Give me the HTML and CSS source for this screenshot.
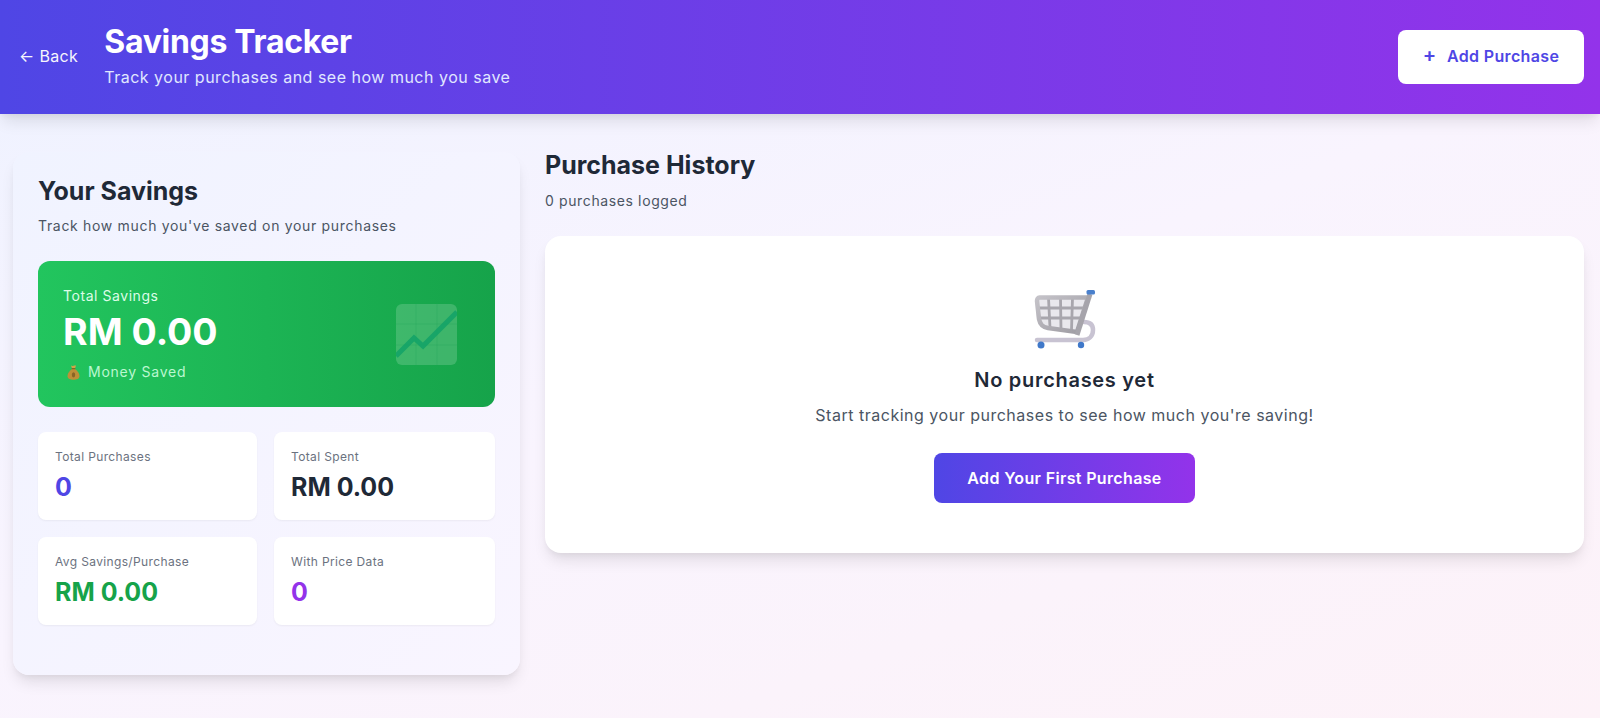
FILE: index.html
```html
<!DOCTYPE html>
<html lang="en">
<head>
    <meta charset="UTF-8">
    <meta name="viewport" content="width=device-width, initial-scale=1.0">
    <title>Savings Tracker</title>
    <link rel="stylesheet" href="styles.css">
</head>
<body>

    <!-- Header -->
    <header class="header">
        <div class="header-left">
            <a class="back-link" href="#">← Back</a>
            <div class="header-text">
                <h1>Savings Tracker</h1>
                <p>Track your purchases and see how much you save</p>
            </div>
        </div>
        <button class="add-btn"><span class="plus">+</span> Add Purchase</button>
    </header>

    <main class="layout">

        <!-- Savings Panel -->
        <section class="panel">
            <h2>Your Savings</h2>
            <p class="panel-sub">Track how much you've saved on your purchases</p>

            <div class="total-card">
                <div>
                    <div class="total-label">Total Savings</div>
                    <div class="total-value">RM 0.00</div>
                    <div class="total-note">
                        <svg class="bag" viewBox="0 0 13 15">
                            <path d="M4 0.500c1 .6 1.500 .6 2.500 .2 1-.4 1.500-.2 2.500-.2L8 3.500H5z" fill="#d0a548"/>
                            <path d="M5 4h3c2.500 1.800 4.500 4.500 4.500 7 0 3-2.800 3.700-6 3.700s-6-.7-6-3.700c0-2.500 2-5.200 4.500-7z" fill="#bd8f38"/>
                            <rect x="4.700" y="3.200" width="3.600" height="1" fill="#7c5a22"/>
                            <ellipse cx="6.500" cy="9.800" rx="1.700" ry="2.600" fill="#8a6526"/>
                        </svg>
                        Money Saved
                    </div>
                </div>
                <svg class="chart" viewBox="0 0 61 61">
                    <rect class="chart-bg" width="61" height="61" rx="6"/>
                    <path class="chart-grid" d="M20 0v61M41 0v61M0 20h61M0 41h61"/>
                    <path class="chart-line" d="M0 52l18-18 9 8 34-34"/>
                </svg>
            </div>

            <div class="stats">
                <div class="stat">
                    <div class="stat-label">Total Purchases</div>
                    <div class="stat-value indigo">0</div>
                </div>
                <div class="stat">
                    <div class="stat-label">Total Spent</div>
                    <div class="stat-value">RM 0.00</div>
                </div>
                <div class="stat">
                    <div class="stat-label">Avg Savings/Purchase</div>
                    <div class="stat-value green">RM 0.00</div>
                </div>
                <div class="stat">
                    <div class="stat-label">With Price Data</div>
                    <div class="stat-value purple">0</div>
                </div>
            </div>
        </section>

        <!-- Purchase History -->
        <section class="history">
            <h2>Purchase History</h2>
            <p class="history-count">0 purchases logged</p>

            <div class="empty-card">
                <svg class="cart" viewBox="0 0 62 59">
                    <defs>
                        <linearGradient id="cartFrame" x1="0" y1="0" x2="1" y2="1">
                            <stop offset="0" stop-color="#c4c2c8"/>
                            <stop offset="1" stop-color="#9c9aa1"/>
                        </linearGradient>
                    </defs>
                    <path d="M5 7h48l-10 35-30-4c-6-1-9-4-10-9L1 11c0-3 2-4 4-4z" fill="#e9e8ed"/>
                    <path d="M14.500 8l1.500 30M26.500 8l.5 32M38.500 8l-1 32M3 18h46M4 28h42" fill="none" stroke="#a8a6ad" stroke-width="2.800"/>
                    <path d="M5.500 7.500H54L43 42l-29-4c-6-1-8-4-9-9L3 11c0-2 1-3.500 2.500-3.500z" fill="none" stroke="url(#cartFrame)" stroke-width="4.500"/>
                    <path d="M50 32c6 0 9 3 9 8 0 6-4 10-10 10H3" fill="none" stroke="#c8c3d2" stroke-width="4.500" stroke-linecap="round"/>
                    <path d="M56 4L43 45" fill="none" stroke="#a6a4ab" stroke-width="5"/>
                    <rect x="52.500" y="0" width="8.500" height="4.500" rx="1.500" fill="#4a80cc"/>
                    <circle cx="7" cy="55" r="3.500" fill="#3f78c9"/>
                    <circle cx="47" cy="55" r="3.200" fill="#3f78c9"/>
                </svg>
                <h3>No purchases yet</h3>
                <p>Start tracking your purchases to see how much you're saving!</p>
                <button class="first-btn">Add Your First Purchase</button>
            </div>
        </section>

    </main>

</body>
</html>
```

FILE: styles.css
```css
/* Global Styles */
* {
    margin: 0;
    padding: 0;
    box-sizing: border-box;
    font-family: Inter, "Liberation Sans", sans-serif;
}

body {
    min-height: 100vh;
    overflow: hidden;
    background: linear-gradient(160deg, #eef2ff 0%, #f9f4fe 50%, #fdf2f8 100%);
    color: #1f2937;
}

/* Header */
.header {
    height: 114px;
    display: flex;
    align-items: center;
    justify-content: space-between;
    padding: 0 16px 0 19px;
    background: linear-gradient(90deg, #4f46e5, #9333ea);
    box-shadow: 0 10px 15px -3px rgba(0, 0, 0, 0.1), 0 4px 6px -2px rgba(0, 0, 0, 0.05);
    color: white;
}

.header-left {
    display: flex;
    align-items: center;
    gap: 26px;
}

.back-link {
    margin-bottom: 2px;
    color: white;
    text-decoration: none;
    font-size: 16px;
    letter-spacing: 0.35px;
    opacity: 0.95;
}

.header-text {
    margin-top: -4px;
}

.header h1 {
    font-size: 32px;
    line-height: 40px;
    font-weight: 700;
    letter-spacing: -0.3px;
}

.header p {
    margin-top: 3px;
    font-size: 16px;
    line-height: 24px;
    letter-spacing: 0.5px;
    color: #e0e7ff;
}

.add-btn {
    width: 186px;
    height: 54px;
    padding-bottom: 2px;
    background: white;
    border: none;
    border-radius: 8px;
    color: #4f46e5;
    font-size: 16px;
    font-weight: 600;
    letter-spacing: 0.35px;
    cursor: pointer;
}

.plus {
    font-size: 20px;
    line-height: 16px;
    margin-right: 6px;
}

/* Main Layout */
.layout {
    display: grid;
    grid-template-columns: 507px 1039px;
    gap: 25px;
    padding: 36px 16px 0 13px;
    align-items: start;
}

/* Savings Panel */
.panel {
    height: 523px;
    margin-top: 2px;
    padding: 23px 25px;
    border-radius: 16px;
    background: linear-gradient(135deg, #f0f3ff, #f9f5ff);
    box-shadow: 0 10px 15px -3px rgba(0, 0, 0, 0.1), 0 4px 6px -2px rgba(0, 0, 0, 0.05);
}

.panel h2 {
    font-size: 25px;
    line-height: 32px;
    font-weight: 700;
}

.panel-sub {
    margin-top: 9px;
    font-size: 14px;
    line-height: 20px;
    letter-spacing: 0.68px;
    color: #4b5563;
}

.total-card {
    height: 146px;
    margin-top: 25px;
    padding: 0 38px 0 25px;
    display: flex;
    align-items: center;
    justify-content: space-between;
    border-radius: 12px;
    background: linear-gradient(90deg, #22c55e, #16a34a);
    color: white;
}

.total-label {
    font-size: 14px;
    line-height: 20px;
    letter-spacing: 0.55px;
    color: #dcfce7;
}

.total-value {
    margin-top: 4px;
    font-size: 37.5px;
    line-height: 44px;
    font-weight: 700;
}

.total-note {
    margin-top: 8px;
    display: flex;
    align-items: center;
    gap: 8px;
    font-size: 14px;
    line-height: 20px;
    letter-spacing: 0.75px;
    color: #bbf7d0;
}

.bag {
    width: 13px;
    height: 15px;
    margin-left: 4px;
}

.chart {
    width: 61px;
    height: 61px;
}

.chart-bg {
    fill: white;
    fill-opacity: 0.17;
}

.chart-grid {
    fill: none;
    stroke: #169a50;
    stroke-width: 1;
    stroke-opacity: 0.2;
}

.chart-line {
    fill: none;
    stroke: #12a267;
    stroke-width: 5;
    stroke-opacity: 0.85;
}

/* Stat Cards */
.stats {
    margin-top: 25px;
    display: grid;
    grid-template-columns: 219px 221px;
    gap: 17px;
}

.stat {
    height: 88px;
    padding: 17px;
    background: white;
    border-radius: 8px;
    box-shadow: 0 1px 2px rgba(0, 0, 0, 0.05);
}

.stat-label {
    font-size: 12px;
    line-height: 16px;
    letter-spacing: 0.36px;
    color: #6b7280;
}

.stat-value {
    margin-top: 6px;
    font-size: 25px;
    line-height: 32px;
    font-weight: 700;
}

.indigo { color: #4f46e5; }
.green { color: #16a34a; }
.purple { color: #9333ea; }

/* Purchase History */
.history h2 {
    font-size: 25px;
    line-height: 32px;
    font-weight: 700;
    margin-top: -1px;
}

.history-count {
    margin-top: 10px;
    font-size: 14px;
    line-height: 20px;
    letter-spacing: 0.62px;
    color: #4b5563;
}

.empty-card {
    height: 317px;
    margin-top: 25px;
    padding-top: 54px;
    display: flex;
    flex-direction: column;
    align-items: center;
    background: white;
    border-radius: 16px;
    box-shadow: 0 10px 15px -3px rgba(0, 0, 0, 0.1), 0 4px 6px -2px rgba(0, 0, 0, 0.05);
}

.cart {
    width: 62px;
    height: 59px;
}

.empty-card h3 {
    margin-top: 17px;
    font-size: 20px;
    line-height: 28px;
    font-weight: 600;
    letter-spacing: 0.7px;
}

.empty-card p {
    margin-top: 9px;
    font-size: 16px;
    line-height: 24px;
    letter-spacing: 0.51px;
    color: #4b5563;
}

.first-btn {
    width: 261px;
    height: 50px;
    margin-top: 26px;
    border: none;
    border-radius: 8px;
    background: linear-gradient(90deg, #4f46e5, #9333ea);
    color: white;
    font-size: 16px;
    font-weight: 600;
    letter-spacing: 0.35px;
    cursor: pointer;
}
```
